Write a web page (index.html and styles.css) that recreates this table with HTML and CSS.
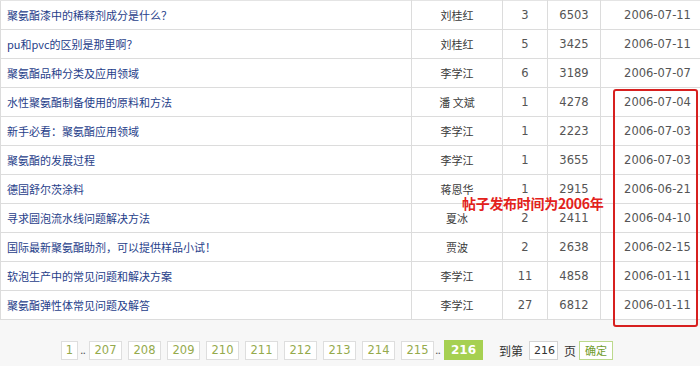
FILE: index.html
```html
<!DOCTYPE html>
<html lang="zh-CN">
<head>
<meta charset="utf-8">
<link rel="stylesheet" href="styles.css">
</head>
<body>
<div class="page">
  <table class="topics">
    <colgroup>
      <col class="c-title"><col class="c-name"><col class="c-reply"><col class="c-view"><col class="c-date">
    </colgroup>
    <tbody>
      <tr><td class="title"><a>聚氨酯漆中的稀释剂成分是什么？</a></td><td class="name">刘桂红</td><td class="num">3</td><td class="num">6503</td><td class="date">2006-07-11</td></tr>
      <tr><td class="title"><a>pu和pvc的区别是那里啊？</a></td><td class="name">刘桂红</td><td class="num">5</td><td class="num">3425</td><td class="date">2006-07-11</td></tr>
      <tr><td class="title"><a>聚氨酯品种分类及应用领域</a></td><td class="name">李学江</td><td class="num">6</td><td class="num">3189</td><td class="date">2006-07-07</td></tr>
      <tr><td class="title"><a>水性聚氨酯制备使用的原料和方法</a></td><td class="name">潘 文斌</td><td class="num">1</td><td class="num">4278</td><td class="date">2006-07-04</td></tr>
      <tr><td class="title"><a>新手必看：聚氨酯应用领域</a></td><td class="name">李学江</td><td class="num">1</td><td class="num">2223</td><td class="date">2006-07-03</td></tr>
      <tr><td class="title"><a>聚氨酯的发展过程</a></td><td class="name">李学江</td><td class="num">1</td><td class="num">3655</td><td class="date">2006-07-03</td></tr>
      <tr><td class="title"><a>德国舒尔茨涂料</a></td><td class="name">蒋恩华</td><td class="num">1</td><td class="num">2915</td><td class="date">2006-06-21</td></tr>
      <tr><td class="title"><a>寻求圆泡流水线问题解决方法</a></td><td class="name">夏冰</td><td class="num">2</td><td class="num">2411</td><td class="date">2006-04-10</td></tr>
      <tr><td class="title"><a>国际最新聚氨酯助剂，可以提供样品小试！</a></td><td class="name">贾波</td><td class="num">2</td><td class="num">2638</td><td class="date">2006-02-15</td></tr>
      <tr><td class="title"><a>软泡生产中的常见问题和解决方案</a></td><td class="name">李学江</td><td class="num">11</td><td class="num">4858</td><td class="date">2006-01-11</td></tr>
      <tr><td class="title"><a>聚氨酯弹性体常见问题及解答</a></td><td class="name">李学江</td><td class="num">27</td><td class="num">6812</td><td class="date">2006-01-11</td></tr>
    </tbody>
  </table>

  <div class="pager">
    <a class="pg first">1</a><span class="dots">..</span><a class="pg">207</a><a class="pg">208</a><a class="pg">209</a><a class="pg">210</a><a class="pg">211</a><a class="pg">212</a><a class="pg">213</a><a class="pg">214</a><a class="pg last">215</a><span class="dots">..</span><span class="pg current">216</span>
    <span class="goto">到第</span><span class="pgin">216</span><span class="ye">页</span><span class="ok">确定</span>
  </div>

  <div class="note-box"></div>
  <div class="note-text">帖子发布时间为2006年</div>
</div>
</body>
</html>
```
FILE: styles.css
```css
html, body {
  margin: 0;
  padding: 0;
  background: #f7f7f7;
  overflow: hidden;
}
body {
  width: 700px;
  height: 366px;
  font-family: "Noto Sans CJK SC", "DejaVu Sans", sans-serif;
}
.page {
  position: relative;
  width: 700px;
  height: 366px;
}
.topics {
  border-collapse: collapse;
  table-layout: fixed;
  width: 714px;
  background: #fff;
}
.c-title { width: 411px; }
.c-name { width: 91px; }
.c-reply { width: 45px; }
.c-view { width: 53px; }
.c-date { width: 114px; }
.topics td {
  height: 28px;
  padding: 0;
  border: 1px solid #dcdcdc;
  border-top: none;
  vertical-align: middle;
  font-size: 11px;
  color: #444;
  white-space: nowrap;
  overflow: hidden;
}
.topics tr:first-child td { border-top: 1px solid #e4e4e4; }
.topics td.title {
  padding-left: 6px;
  text-align: left;
}
.topics td.title a {
  color: #1f3e8a;
  font-size: 11px;
}
.topics td.name {
  text-align: center;
  color: #3a3a3a;
}
.topics td.num, .topics td.date {
  text-align: center;
  font-family: "DejaVu Sans", sans-serif;
  font-size: 11.5px;
  color: #555;
}
.pager {
  display: flex;
  align-items: center;
  padding-left: 61px;
  margin-top: 20px;
  height: 20px;
  font-family: "DejaVu Sans", sans-serif;
  font-size: 11.5px;
}
.pg {
  box-sizing: border-box;
  height: 19px;
  width: 33px;
  border: 1px solid #dedede;
  background: #fff;
  color: #95aa4c;
  display: flex;
  align-items: center;
  justify-content: center;
  margin-right: 6px;
}
.pg.first { width: 17px; margin-right: 2px; }
.pg.last { margin-right: 1px; }
.dots {
  width: 9px;
  color: #555;
  font-size: 11px;
  letter-spacing: -1px;
  align-self: flex-end;
  padding-bottom: 3px;
}
.pg.current {
  background: #a6d051;
  border-color: #a6d051;
  color: #fff;
  font-weight: bold;
  font-size: 12px;
  height: 20px;
  width: 39px;
  margin-right: 16px;
}
.goto {
  font-family: "Noto Sans CJK SC", sans-serif;
  font-size: 12px;
  color: #333;
  margin-right: 6px;
}
.pgin {
  box-sizing: border-box;
  width: 29px;
  height: 19px;
  border: 1px solid #d4d4d4;
  background: #fff;
  font-size: 11px;
  color: #333;
  text-align: right;
  padding-right: 2px;
  line-height: 17px;
  margin-right: 6px;
}
.ye {
  font-family: "Noto Sans CJK SC", sans-serif;
  font-size: 12px;
  color: #333;
  margin-right: 3px;
}
.ok {
  box-sizing: border-box;
  height: 19px;
  padding: 0 5px;
  border: 1px solid #bcd98c;
  background: #fff;
  font-family: "Noto Sans CJK SC", sans-serif;
  font-size: 11px;
  color: #6f9b2c;
  line-height: 17px;
}
.note-box {
  position: absolute;
  left: 613px;
  top: 89px;
  width: 81px;
  height: 234px;
  border: 2px solid #d7201f;
  border-radius: 3px;
}
.note-text {
  position: absolute;
  left: 462px;
  top: 193px;
  font-family: "Noto Sans CJK SC", sans-serif;
  font-weight: bold;
  font-size: 14px;
  color: #e3221b;
  white-space: nowrap;
  letter-spacing: -0.3px;
}
```
